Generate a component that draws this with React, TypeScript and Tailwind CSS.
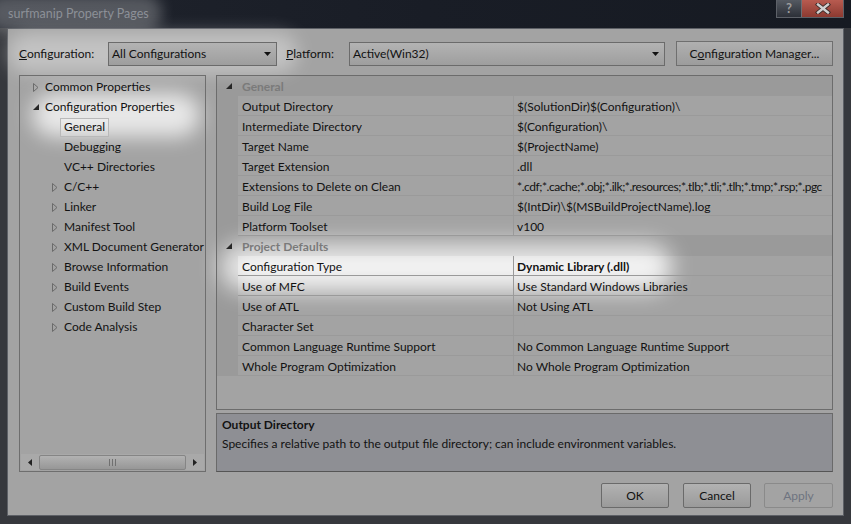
import React from "react";

type TreeItem = { label: string; level: number; exp?: "open" | "closed"; selected?: boolean };

const tree: TreeItem[] = [
  { label: "Common Properties", level: 0, exp: "closed" },
  { label: "Configuration Properties", level: 0, exp: "open" },
  { label: "General", level: 1, selected: true },
  { label: "Debugging", level: 1 },
  { label: "VC++ Directories", level: 1 },
  { label: "C/C++", level: 1, exp: "closed" },
  { label: "Linker", level: 1, exp: "closed" },
  { label: "Manifest Tool", level: 1, exp: "closed" },
  { label: "XML Document Generator", level: 1, exp: "closed" },
  { label: "Browse Information", level: 1, exp: "closed" },
  { label: "Build Events", level: 1, exp: "closed" },
  { label: "Custom Build Step", level: 1, exp: "closed" },
  { label: "Code Analysis", level: 1, exp: "closed" },
];

type Row = { name: string; value: string; bold?: boolean; tight?: boolean };
type Group = { title: string; rows: Row[] };

const groups: Group[] = [
  {
    title: "General",
    rows: [
      { name: "Output Directory", value: "$(SolutionDir)$(Configuration)\\" },
      { name: "Intermediate Directory", value: "$(Configuration)\\" },
      { name: "Target Name", value: "$(ProjectName)" },
      { name: "Target Extension", value: ".dll" },
      {
        name: "Extensions to Delete on Clean",
        value: "*.cdf;*.cache;*.obj;*.ilk;*.resources;*.tlb;*.tli;*.tlh;*.tmp;*.rsp;*.pgc",
        tight: true,
      },
      { name: "Build Log File", value: "$(IntDir)\\$(MSBuildProjectName).log" },
      { name: "Platform Toolset", value: "v100" },
    ],
  },
  {
    title: "Project Defaults",
    rows: [
      { name: "Configuration Type", value: "Dynamic Library (.dll)", bold: true },
      { name: "Use of MFC", value: "Use Standard Windows Libraries" },
      { name: "Use of ATL", value: "Not Using ATL" },
      { name: "Character Set", value: "" },
      { name: "Common Language Runtime Support", value: "No Common Language Runtime Support" },
      { name: "Whole Program Optimization", value: "No Whole Program Optimization" },
    ],
  },
];

function Collapsed() {
  return (
    <svg width="6" height="9" viewBox="0 0 6 9">
      <polygon points="0.5,0.5 5,4.5 0.5,8.5" fill="none" stroke="#6b6b6b" strokeWidth="1" />
    </svg>
  );
}

function Expanded() {
  return (
    <svg width="6" height="6" viewBox="0 0 6 6">
      <polygon points="6,0 6,6 0,6" fill="#262626" />
    </svg>
  );
}

function Combo({ text, width }: { text: string; width: string }) {
  return (
    <div
      className={`${width} h-[24px] flex items-center justify-between pl-[3px] pr-[5px] border border-[#6b6b6b] bg-gradient-to-b from-[#b3b3b3] to-[#9e9e9e]`}
    >
      <span className="text-[12px]">{text}</span>
      <svg width="7" height="4" viewBox="0 0 7 4">
        <polygon points="0,0 7,0 3.5,4" fill="#111" />
      </svg>
    </div>
  );
}

function TitleBar() {
  return (
    <div className="relative isolate h-[28px] flex items-start bg-gradient-to-r from-[#1f232c] via-[#191d26] to-[#161a22]">
      <div className="absolute -z-10 left-[-14px] top-[-6px] w-[176px] h-[38px] rounded-full bg-white/25 blur-[7px]" />
      <span className="pl-[8px] pt-[5px] text-[12.5px] text-[#8c9097]">surfmanip Property Pages</span>
      <div className="ml-auto mr-[7px] flex border border-[#5d6168] border-t-0">
        <div className="w-[25px] h-[17px] flex items-center justify-center bg-gradient-to-b from-[#555a62] to-[#2c3038] border-r border-[#6a6e75] text-[#9d9d9d] text-[13px] font-bold leading-none">
          ?
        </div>
        <div className="w-[41px] h-[17px] flex items-center justify-center bg-gradient-to-b from-[#b85b50] to-[#8c3a31]">
          <svg width="16" height="11" viewBox="0 0 16 11">
            <path d="M3 1.5 L13 9.5 M13 1.5 L3 9.5" stroke="#3a2a28" strokeWidth="4.2" strokeLinecap="square" />
            <path d="M3 1.5 L13 9.5 M13 1.5 L3 9.5" stroke="#d0d0d0" strokeWidth="2.4" strokeLinecap="square" />
          </svg>
        </div>
      </div>
    </div>
  );
}

function Tree() {
  return (
    <div className="w-[187px] h-[397px] border border-[#6e6e6e] flex flex-col">
      <div className="flex-1 pt-[1px]">
        {tree.map((it) => (
          <div key={it.label} className="h-[20px] flex items-center">
            <div className={`${it.level === 0 ? "w-[25px]" : "w-[44px]"} flex justify-end pr-[6px]`}>
              {it.exp === "closed" && <Collapsed />}
              {it.exp === "open" && <Expanded />}
            </div>
            {it.selected ? (
              <span className="-ml-[4px] px-[3px] h-[19px] flex items-center border border-[#b9b9b9] bg-white/20 whitespace-nowrap">
                {it.label}
              </span>
            ) : (
              <span className="whitespace-nowrap">{it.label}</span>
            )}
          </div>
        ))}
      </div>
      <div className="h-[16px] mx-[1px] mb-[1px] flex items-center bg-[#a9a9a9]">
        <div className="w-[18px] h-full flex items-center justify-center">
          <svg width="4" height="7" viewBox="0 0 4 7">
            <polygon points="4,0 4,7 0,3.5" fill="#222" />
          </svg>
        </div>
        <div className="flex-1 h-[15px] flex items-center justify-center border border-[#858585] rounded-[2px] bg-gradient-to-b from-[#b2b2b2] to-[#979797]">
          <div className="flex gap-[2px]">
            <div className="w-px h-[7px] bg-[#707070]" />
            <div className="w-px h-[7px] bg-[#707070]" />
            <div className="w-px h-[7px] bg-[#707070]" />
          </div>
        </div>
        <div className="w-[18px] h-full flex items-center justify-center">
          <svg width="4" height="7" viewBox="0 0 4 7">
            <polygon points="0,0 0,7 4,3.5" fill="#222" />
          </svg>
        </div>
      </div>
    </div>
  );
}

function Grid() {
  return (
    <div className="w-[617px] flex flex-col gap-[3px]">
      <div className="h-[335px] border border-[#6c6c6c] overflow-hidden">
        {groups.map((g) => (
          <div key={g.title}>
            <div className="h-[20px] flex items-center bg-black/[0.05]">
              <div className="w-[21px] flex justify-center pl-[2px]">
                <Expanded />
              </div>
              <span className="pl-[4px] pt-[2px] font-bold text-[#7a7a7a]">{g.title}</span>
            </div>
            {g.rows.map((r) => (
              <div key={r.name} className="h-[20px] flex">
                <div className="w-[21px] h-full bg-black/[0.05]" />
                <div className="w-[276px] h-full flex items-center pl-[4px] pt-[2px] border-r border-b border-[#9a9a9a] whitespace-nowrap">
                  {r.name}
                </div>
                <div
                  className={`flex-1 min-w-0 h-full flex items-center pl-[3px] pt-[2px] border-b border-[#9a9a9a] whitespace-nowrap overflow-hidden ${
                    r.bold ? "font-bold" : ""
                  } ${r.tight ? "tracking-[-0.45px]" : ""}`}
                >
                  {r.value}
                </div>
              </div>
            ))}
          </div>
        ))}
      </div>
      <div className="h-[59px] border border-[#6a6a6a] border-b-[#555] bg-[#8e8f94] px-[5px] pt-[1px]">
        <div className="font-bold h-[19px] flex items-center">Output Directory</div>
        <div className="h-[19px] flex items-center">
          Specifies a relative path to the output file directory; can include environment variables.
        </div>
      </div>
    </div>
  );
}

function Button({ label, width, disabled }: { label: string; width: string; disabled?: boolean }) {
  return (
    <div
      className={`${width} h-[25px] flex items-center justify-center border rounded-[2px] ${
        disabled
          ? "border-[#8a8a8a] bg-[#a3a3a3] text-[#6e7380]"
          : "border-[#6a6a6a] bg-gradient-to-b from-[#b2b2b2] to-[#9a9a9a]"
      }`}
    >
      {label}
    </div>
  );
}

export default function App() {
  return (
    <div className="w-[851px] h-[524px] overflow-hidden bg-[#36383d] font-['Lato','Noto_Sans',sans-serif] text-[12px] text-[#121212]">
      <TitleBar />
      <div className="px-[7px]">
        <div className="relative isolate w-[837px] h-[488px] border border-[#5d6066] bg-[#a3a3a3] flex flex-col pt-[12px] pl-[11px] pr-[10px]">
          <div className="absolute -z-10 left-[0px] top-[4px] w-[290px] h-[40px] rounded-full bg-white/35 blur-[9px]" />
          <div className="absolute -z-10 left-[24px] top-[64px] w-[168px] h-[44px] rounded-full bg-white/75 blur-[10px]" />
          <div className="absolute -z-10 left-[212px] top-[214px] w-[452px] h-[48px] rounded-full bg-white/85 blur-[11px]" />

          <div className="h-[25px] flex items-center">
            <span className="w-[89px]">
              <span className="underline">C</span>onfiguration:
            </span>
            <Combo text="All Configurations" width="w-[169px]" />
            <span className="ml-[9px] w-[63px]">
              <span className="underline">P</span>latform:
            </span>
            <Combo text="Active(Win32)" width="w-[316px]" />
            <div className="ml-[11px] w-[157px] h-[25px] flex items-center justify-center border border-[#6f6f6f] bg-gradient-to-b from-[#b0b0b0] to-[#9c9c9c]">
              C<span className="underline">o</span>nfiguration Manager...
            </div>
          </div>

          <div className="mt-[9px] flex gap-[10px]">
            <Tree />
            <Grid />
          </div>

          <div className="mt-[11px] flex justify-end">
            <Button label="OK" width="w-[68px]" />
            <div className="w-[14px]" />
            <Button label="Cancel" width="w-[68px]" />
            <div className="w-[13px]" />
            <Button label="Apply" width="w-[69px]" disabled />
          </div>
        </div>
      </div>
    </div>
  );
}
